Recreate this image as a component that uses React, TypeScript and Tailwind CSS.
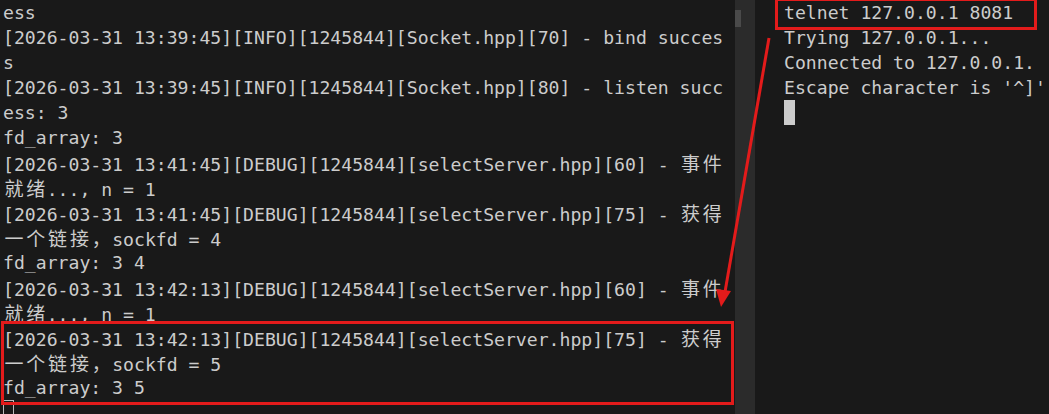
import React from "react";

const CJK = /[\u3000-\u9fff\uff00-\uffef]/;

function TermLine({ text }: { text: string }) {
  const parts: React.ReactNode[] = [];
  let buf = "";
  let key = 0;
  for (const ch of text) {
    if (CJK.test(ch)) {
      if (buf) {
        parts.push(<span key={key++}>{buf}</span>);
        buf = "";
      }
      parts.push(
        <span
          key={key++}
          className="inline-block w-[21.84px] text-center font-['Noto_Sans_CJK_SC',sans-serif] text-[19px]"
        >
          {ch}
        </span>
      );
    } else {
      buf += ch;
    }
  }
  if (buf) parts.push(<span key={key++}>{buf}</span>);
  return <div className="h-[25px] whitespace-pre">{parts}</div>;
}

const leftLines = [
  "ess",
  "[2026-03-31 13:39:45][INFO][1245844][Socket.hpp][70] - bind succes",
  "s",
  "[2026-03-31 13:39:45][INFO][1245844][Socket.hpp][80] - listen succ",
  "ess: 3",
  "fd_array: 3",
  "[2026-03-31 13:41:45][DEBUG][1245844][selectServer.hpp][60] - 事件",
  "就绪..., n = 1",
  "[2026-03-31 13:41:45][DEBUG][1245844][selectServer.hpp][75] - 获得",
  "一个链接，sockfd = 4",
  "fd_array: 3 4",
  "[2026-03-31 13:42:13][DEBUG][1245844][selectServer.hpp][60] - 事件",
  "就绪..., n = 1",
  "[2026-03-31 13:42:13][DEBUG][1245844][selectServer.hpp][75] - 获得",
  "一个链接，sockfd = 5",
  "fd_array: 3 5",
];

const rightLines = [
  "telnet 127.0.0.1 8081",
  "Trying 127.0.0.1...",
  "Connected to 127.0.0.1.",
  "Escape character is '^]'",
];

export default function App() {
  return (
    <div className="relative h-[414px] w-[1049px] overflow-hidden bg-[#191919] font-['DejaVu_Sans_Mono',monospace] text-[18.14px] leading-[25px] text-[#cccccc]">
      <div className="flex h-full">
        {/* left pane */}
        <div className="w-[735px] shrink-0 overflow-hidden pl-[3px]">
          {leftLines.map((l, i) => (
            <TermLine key={i} text={l} />
          ))}
          <div className="h-[25px]">
            <div className="h-[25px] w-[11px] border border-[#bbbbbb]" />
          </div>
        </div>
        {/* scrollbar */}
        <div className="w-[20px] shrink-0 bg-[#2b2b2b] pt-[10px]">
          <div className="h-[17px] w-[6px] bg-[#4a4a4a]" />
        </div>
        {/* right pane */}
        <div className="min-w-0 flex-1 overflow-hidden pl-[29px]">
          {rightLines.map((l, i) => (
            <TermLine key={i} text={l} />
          ))}
          <div className="h-[25px]">
            <div className="h-[25px] w-[11px] bg-[#cccccc]" />
          </div>
        </div>
      </div>

      {/* annotations */}
      <div className="pointer-events-none absolute left-[1px] top-[321px] h-[84px] w-[733px] border-[3px] border-[#e31b1b]" />
      <div className="pointer-events-none absolute left-[775px] top-[-2px] h-[32px] w-[262px] border-[3px] border-[#e31b1b]" />
      <svg
        className="pointer-events-none absolute left-0 top-0"
        width="1049"
        height="414"
        viewBox="0 0 1049 414"
      >
        <line x1="769" y1="38" x2="725" y2="292" stroke="#e31b1b" strokeWidth="3" />
        <polygon points="721,307 716,289 731,291" fill="#e31b1b" />
      </svg>
    </div>
  );
}
